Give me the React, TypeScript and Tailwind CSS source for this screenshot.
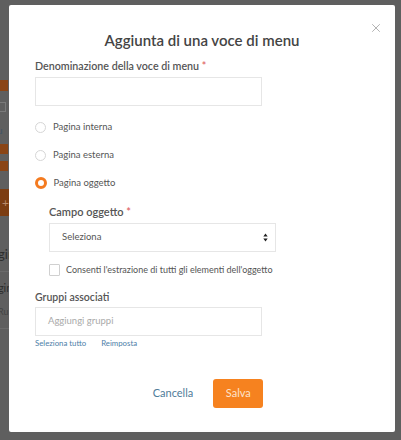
import { X } from "lucide-react";

const font = { fontFamily: '"Lato", "Liberation Sans", sans-serif' };

function Radio({ label, checked = false }: { label: string; checked?: boolean }) {
  return (
    <div className="flex items-center h-4 gap-[7px]">
      {checked ? (
        <span className="w-[12px] h-[12px] rounded-full border-[3.5px] border-[#f47b20] bg-white -ml-[0.5px]" />
      ) : (
        <span className="w-[11px] h-[11px] rounded-full border border-[#d6d6d6] bg-white" />
      )}
      <span className="text-[9.5px] text-[#555]">{label}</span>
    </div>
  );
}

export default function App() {
  return (
    <div className="relative w-[401px] h-[440px] bg-[#5f5f5f] overflow-hidden" style={font}>
      {/* pagina sottostante, coperta dal backdrop */}
      <div className="flex flex-col w-[60px] pt-[80px] -ml-[2px]">
        <div className="w-[10px] h-[11px] bg-[#8a4516]" />
        <div className="mt-[11px] w-[8px] h-[10px] border border-[#7a7a7a]" />
        <div className="mt-[14px] -ml-[6px] text-[9px] text-[#3d5366] leading-none">Ru</div>
        <div className="mt-[9px] w-[10px] h-[10px] bg-[#8a4516]" />
        <div className="mt-[7px] w-[10px] h-[10px] bg-[#8a4516]" />
        <div className="mt-[18px] w-[30px] h-[27px] bg-[#7c3d12] text-[#b98a6a] text-[12px] leading-[27px] pl-[4px]">+</div>
        <div className="mt-[32px] -ml-[14px] text-[13px] text-[#2e2e2e] leading-none">Pagina</div>
        <div className="mt-[10px] h-px bg-[#6b6b6b]" />
        <div className="mt-[10px] -ml-[12px] text-[11px] text-[#2e2e2e] leading-none">Pagina</div>
        <div className="mt-[14px] text-[9px] text-[#444] leading-none">Ru</div>
        <div className="mt-[12px] h-px bg-[#6b6b6b]" />
      </div>

      {/* modale */}
      <div className="absolute left-[9px] top-[5px] w-[386px] h-[427px] bg-white rounded-[2px] px-[26px] pt-[25px]">
        <button className="absolute right-[12px] top-[16px] text-[#9a9a9a]">
          <X size={14} strokeWidth={1.3} />
        </button>
        <h2 className="text-center text-[15px] leading-[21px] font-semibold text-[#444]">
          Aggiunta di una voce di menu
        </h2>

        <div className="mt-[7px] text-[10.7px] leading-4 font-semibold text-[#555]">
          Denominazione della voce di menu <span className="text-[#e06666]">*</span>
        </div>
        <div className="mt-[3px] w-[227px] h-[29px] border border-[#e6e6e6]" />

        <div className="mt-[13px] flex flex-col gap-[12px]">
          <Radio label="Pagina interna" />
          <Radio label="Pagina esterna" />
          <Radio label="Pagina oggetto" checked />
        </div>

        <div className="ml-[14px]">
          <div className="mt-[13px] text-[11px] leading-4 font-semibold text-[#555]">
            Campo oggetto <span className="text-[#e06666]">*</span>
          </div>
          <div className="mt-[3px] w-[227px] h-[29px] border border-[#e6e6e6] flex items-center justify-between pl-[12px] pr-[7px]">
            <span className="text-[9.5px] text-[#555]">Seleziona</span>
            <svg width="5" height="9" viewBox="0 0 5 9">
              <path d="M2.5 0.5 L4.7 3.5 H0.3 Z M2.5 8.5 L4.7 5.5 H0.3 Z" fill="#222" />
            </svg>
          </div>
          <div className="mt-[10px] h-4 flex items-center gap-[6px]">
            <span className="w-[11px] h-[12px] border border-[#d0d0d0] rounded-[1px]" />
            <span className="text-[9px] text-[#555]">
              Consenti l'estrazione di tutti gli elementi dell'oggetto
            </span>
          </div>
        </div>

        <div className="mt-[11px] text-[10.5px] leading-4 font-semibold text-[#555]">Gruppi associati</div>
        <div className="mt-[2px] w-[227px] h-[29px] border border-[#e6e6e6] flex items-center pl-[12px]">
          <span className="text-[9.5px] text-[#aaa]">Aggiungi gruppi</span>
        </div>
        <div className="mt-px h-[14px] flex items-center gap-[15px] text-[7.8px] text-[#4d7ea8]">
          <span>Seleziona tutto</span>
          <span>Reimposta</span>
        </div>

        <div className="mt-[28px] flex justify-center gap-[8px]">
          <button className="h-[29px] px-[12px] text-[11px] text-[#4f7c99]">Cancella</button>
          <button className="h-[29px] w-[50px] rounded-[3px] bg-[#f6821f] text-[11px] text-[#fde3cc]">
            Salva
          </button>
        </div>
      </div>
    </div>
  );
}
